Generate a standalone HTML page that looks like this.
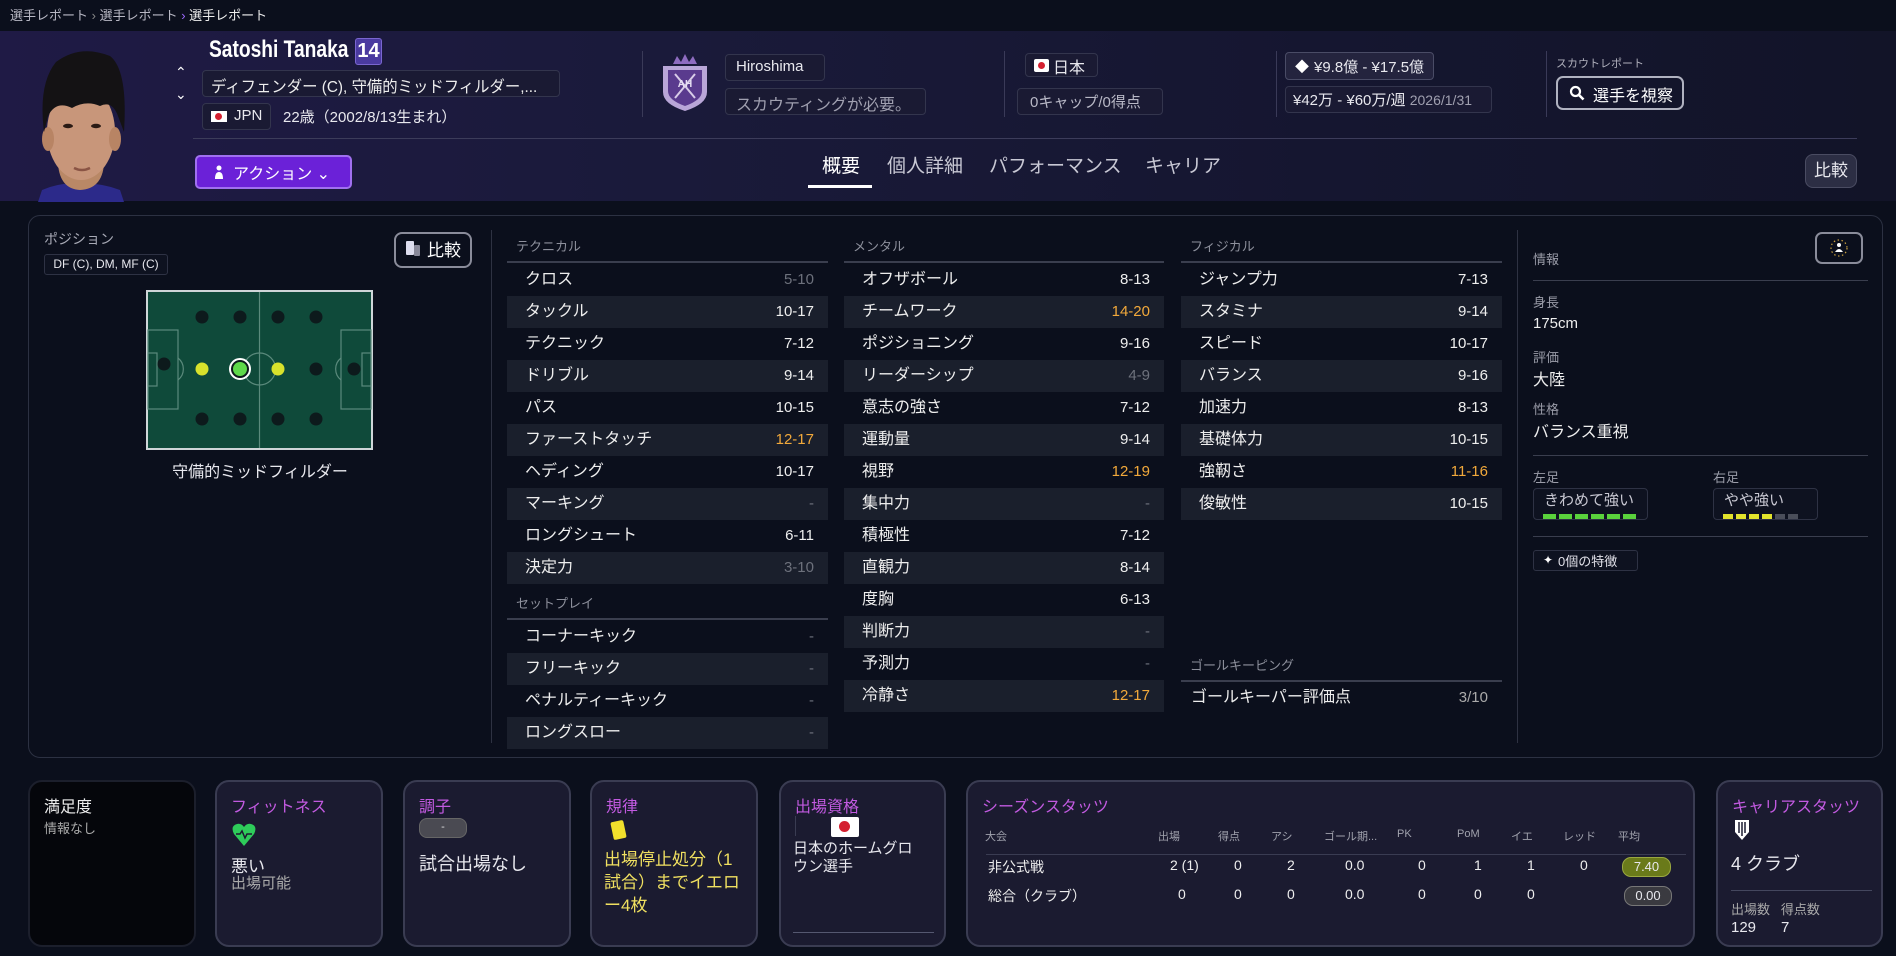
<!DOCTYPE html>
<html><head><meta charset="utf-8"><style>
*{margin:0;padding:0;box-sizing:border-box}
body{width:1896px;height:956px;background:#0b0f1c;font-family:"Liberation Sans","Noto Sans CJK JP",sans-serif;color:#e8e8ee;position:relative;overflow:hidden}
.a{position:absolute;white-space:nowrap}
.box{position:absolute;border:1px solid #33354d;border-radius:4px;background:#1a1a33}
.hdr{position:absolute;left:0;top:31px;width:1896px;height:170px;background:linear-gradient(90deg,#1f1a45 0%,#1a1a3a 35%,#151630 70%,#121428 100%)}
.vd{position:absolute;width:1px;background:#3a3a58}
.tab{position:absolute;top:151px;font-size:19px;color:#c8c8d4}
.col{position:absolute}
.sh{position:absolute;font-size:13px;color:#8d909c}
.ln{position:absolute;height:2px;background:#3a3e4e}
.row{position:absolute;height:32px;font-size:16px;color:#eee}
.row.s{background:#1a1f2c}
.row .l{position:absolute;left:18px;top:0;line-height:32px}
.row .v{position:absolute;right:14px;top:0;line-height:32px;font-size:15px}
.o{color:#f2a93b}.g{color:#6d717c}
.card{position:absolute;top:780px;height:167px;border:2px solid #3a3c52;border-radius:14px;background:#1b1b30}
.ct{position:absolute;left:14px;top:11px;font-size:16px;color:#c25ae0}
.il{position:absolute;font-size:13px;color:#9a9ca8}
.iv{position:absolute;font-size:16px;color:#eee}
.th{position:absolute;top:828px;font-size:11px;color:#a0a2ad}
.td{position:absolute;font-size:14px;color:#eee}
</style></head><body>
<div class="a" style="left:10px;top:5px;font-size:13px;color:#b8b8c4">選手レポート <span style="color:#888">›</span> 選手レポート <span style="color:#9d6bff">›</span> <span style="color:#eee">選手レポート</span></div>

<div class="hdr"></div>
<svg class="a" style="left:20px;top:44px" width="120" height="158" viewBox="0 0 120 158">
<path d="M18 158 L22 146 Q40 138 58 140 Q80 138 100 146 L104 158Z" fill="#2c2a8a"/>
<path d="M38 120 Q40 145 60 146 Q82 145 84 120 L84 100 L38 100Z" fill="#b98866"/>
<ellipse cx="61" cy="88" rx="34" ry="48" fill="#c8967a"/>
<ellipse cx="28" cy="95" rx="6" ry="12" fill="#b88464"/>
<ellipse cx="95" cy="95" rx="6" ry="12" fill="#b88464"/>
<path d="M24 88 Q18 40 36 18 Q60 0 90 12 Q108 26 104 88 L98 72 Q92 56 80 62 Q66 56 52 64 Q36 56 28 72Z" fill="#141214"/>
<ellipse cx="48" cy="82" rx="5" ry="2.2" fill="#2a1a14"/><ellipse cx="76" cy="82" rx="5" ry="2.2" fill="#2a1a14"/>
<path d="M54 124 Q62 128 70 124" stroke="#8a5444" stroke-width="2.5" fill="none"/>
</svg>
<div class="a" style="left:175px;top:64px;color:#fff;font-size:14px">&#x2303;</div>
<div class="a" style="left:175px;top:86px;color:#fff;font-size:14px">&#x2304;</div>
<div class="a" style="left:209px;top:36px;font-weight:bold;font-size:24px;color:#fff;transform:scaleX(0.8);transform-origin:left top">Satoshi Tanaka</div>
<div class="a" style="left:355px;top:38px;width:27px;height:27px;background:#4a3aa0;border:1px solid #7a66d0;border-radius:3px;color:#fff;font-weight:bold;font-size:20px;text-align:center;line-height:25px">14</div>
<div class="box" style="left:202px;top:70px;width:358px;height:27px"></div>
<div class="a" style="left:211px;top:73px;font-size:16px;color:#eee;transform:scaleX(0.96);transform-origin:left">ディフェンダー (C), 守備的ミッドフィルダー,...</div>
<div class="box" style="left:202px;top:103px;width:69px;height:27px"></div>
<div class="a" style="left:211px;top:111px;width:16px;height:11px;background:#fff"><div style="width:7px;height:7px;border-radius:50%;background:#d42030;margin:2px 4px"></div></div>
<div class="a" style="left:234px;top:107px;font-size:15px">JPN</div>
<div class="a" style="left:283px;top:106px;font-size:15px">22歳（2002/8/13生まれ）</div>

<div class="vd" style="left:642px;top:51px;height:66px"></div>
<svg class="a" style="left:659px;top:54px" width="52" height="58" viewBox="0 0 52 58">
<path d="M14 10 L18 2 L22 8 L26 0 L30 8 L34 2 L38 10Z" fill="#8e6cc0"/>
<path d="M4 12 H48 V38 Q48 50 26 57 Q4 50 4 38Z" fill="#b9a6d8"/>
<path d="M9 16 H43 V37 Q43 46 26 52 Q9 46 9 37Z" fill="#5a3b8e"/>
<path d="M16 20 L36 44 M36 20 L16 44" stroke="#d8cce8" stroke-width="2"/>
<text x="26" y="33" font-size="10" fill="#e8e0f4" text-anchor="middle" font-weight="bold" font-family="Liberation Sans">AH</text>
</svg>
<div class="box" style="left:725px;top:54px;width:100px;height:27px"></div>
<div class="a" style="left:736px;top:58px;font-size:15px">Hiroshima</div>
<div class="box" style="left:725px;top:88px;width:201px;height:27px"></div>
<div class="a" style="left:736px;top:91px;font-size:16px;color:#a0a0b0">スカウティングが必要。</div>

<div class="vd" style="left:1004px;top:51px;height:66px"></div>
<div class="box" style="left:1025px;top:53px;width:73px;height:24px"></div>
<div class="a" style="left:1034px;top:59px;width:15px;height:13px;background:#fff;border-radius:2px"><div style="width:7px;height:7px;border-radius:50%;background:#d42030;margin:3px 4px"></div></div>
<div class="a" style="left:1053px;top:54px;font-size:16px">日本</div>
<div class="box" style="left:1017px;top:88px;width:146px;height:27px"></div>
<div class="a" style="left:1030px;top:91px;font-size:15px;color:#b8b8c6">0キャップ/0得点</div>

<div class="vd" style="left:1276px;top:51px;height:66px"></div>
<div class="box" style="left:1285px;top:52px;width:149px;height:28px;background:#24243e;border-color:#4a4c66"></div>
<div class="a" style="left:1295px;top:57px;font-size:14px;color:#fff">&#x25C6;</div>
<div class="a" style="left:1314px;top:56px;font-size:15px">¥9.8億 - ¥17.5億</div>
<div class="box" style="left:1285px;top:86px;width:207px;height:27px"></div>
<div class="a" style="left:1293px;top:89px;font-size:15px">¥42万 - ¥60万/週 <span style="font-size:14px;color:#a0a0b0">2026/1/31</span></div>

<div class="vd" style="left:1546px;top:51px;height:66px"></div>
<div class="a" style="left:1556px;top:55px;font-size:11px;color:#b0b0bc">スカウトレポート</div>
<div class="a" style="left:1556px;top:76px;width:128px;height:34px;border:2px solid #b0b2c0;border-radius:7px"></div>
<svg class="a" style="left:1569px;top:85px" width="16" height="16" viewBox="0 0 16 16"><circle cx="6.5" cy="6.5" r="4.5" fill="none" stroke="#fff" stroke-width="2.2"/><path d="M10 10 L14.5 14.5" stroke="#fff" stroke-width="2.6"/></svg>
<div class="a" style="left:1593px;top:82px;font-size:16px;color:#fff">選手を視察</div>

<div class="a" style="left:193px;top:138px;width:1664px;height:1px;background:#3c3c5a"></div>
<div class="a" style="left:195px;top:155px;width:157px;height:34px;background:#6b21d8;border:2px solid #a070f0;border-radius:5px"></div>
<svg class="a" style="left:214px;top:164px" width="10" height="16" viewBox="0 0 10 16"><circle cx="5" cy="4" r="2.5" fill="#fff"/><path d="M1 15 Q1 8 5 8 Q9 8 9 15Z" fill="#fff"/></svg>
<div class="a" style="left:233px;top:160px;font-size:16px;color:#fff">アクション &#x2304;</div>
<div class="tab" style="left:822px;color:#fff">概要</div>
<div class="a" style="left:808px;top:185px;width:64px;height:3px;background:#fff"></div>
<div class="tab" style="left:887px">個人詳細</div>
<div class="tab" style="left:989px">パフォーマンス</div>
<div class="tab" style="left:1145px">キャリア</div>
<div class="a" style="left:1805px;top:154px;width:52px;height:34px;background:#2c2e44;border:1px solid #4a4c62;border-radius:8px;font-size:17px;text-align:center;line-height:32px">比較</div>

<div class="a" style="left:28px;top:215px;width:1855px;height:543px;border:1px solid #2c3142;border-radius:12px"></div>
<div class="a" style="left:44px;top:229px;font-size:14px;color:#a8aab6">ポジション</div>
<div class="a" style="left:44px;top:254px;width:124px;height:21px;border:1px solid #2e3244;border-radius:3px;background:#0e1220;font-size:12px;text-align:center;line-height:19px">DF (C), DM, MF (C)</div>
<div class="a" style="left:394px;top:232px;width:78px;height:36px;border:2px solid #8a8c9a;border-radius:8px"></div>
<div class="a" style="left:406px;top:241px;width:8px;height:14px;background:#dde;border-radius:1px"></div>
<div class="a" style="left:414px;top:245px;width:6px;height:11px;background:#889;border-radius:1px"></div>
<div class="a" style="left:427px;top:236px;font-size:17px;color:#fff">比較</div>
<svg class="a" style="left:146px;top:290px" width="227" height="160" viewBox="0 0 227 160">
<rect x="1" y="1" width="225" height="158" fill="#0f4a3a" stroke="#cfd6d8" stroke-width="2"/>
<g stroke="#5b8a7c" stroke-width="1.2" fill="none">
<line x1="113.5" y1="2" x2="113.5" y2="158"/><circle cx="113.5" cy="79" r="16"/>
<rect x="2" y="40" width="30" height="79"/><rect x="2" y="63" width="9" height="33"/><path d="M32 68 A14 14 0 0 1 32 90"/>
<rect x="195" y="40" width="30" height="79"/><rect x="216" y="63" width="9" height="33"/><path d="M195 68 A14 14 0 0 0 195 90"/></g>
<g fill="#0d1a1c"><circle cx="56" cy="27" r="6.5"/><circle cx="94" cy="27" r="6.5"/><circle cx="132" cy="27" r="6.5"/><circle cx="170" cy="27" r="6.5"/>
<circle cx="56" cy="129" r="6.5"/><circle cx="94" cy="129" r="6.5"/><circle cx="132" cy="129" r="6.5"/><circle cx="170" cy="129" r="6.5"/>
<circle cx="18" cy="74" r="6.5"/><circle cx="170" cy="79" r="6.5"/><circle cx="208" cy="79" r="6.5"/></g>
<circle cx="56" cy="79" r="6.5" fill="#d8e22c"/><circle cx="132" cy="79" r="6.5" fill="#d8e22c"/>
<circle cx="94" cy="79" r="10" fill="#0d1a1c" stroke="#fff" stroke-width="2"/><circle cx="94" cy="79" r="7" fill="#5ed84a"/>
</svg>
<div class="a" style="left:260px;top:458px;transform:translateX(-50%);font-size:16px">守備的ミッドフィルダー</div>
<div class="vd" style="left:491px;top:230px;height:513px;background:#2e3242"></div>

<div class="sh" style="left:516px;top:236px">テクニカル</div>
<div class="ln" style="left:507px;top:261px;width:321px"></div>
<div class="col" style="left:507px;top:264px;width:321px">
<div class="row" style="top:0;width:321px"><span class="l">クロス</span><span class="v g">5-10</span></div>
<div class="row s" style="top:32px;width:321px"><span class="l">タックル</span><span class="v">10-17</span></div>
<div class="row" style="top:64px;width:321px"><span class="l">テクニック</span><span class="v">7-12</span></div>
<div class="row s" style="top:96px;width:321px"><span class="l">ドリブル</span><span class="v">9-14</span></div>
<div class="row" style="top:128px;width:321px"><span class="l">パス</span><span class="v">10-15</span></div>
<div class="row s" style="top:160px;width:321px"><span class="l">ファーストタッチ</span><span class="v o">12-17</span></div>
<div class="row" style="top:192px;width:321px"><span class="l">ヘディング</span><span class="v">10-17</span></div>
<div class="row s" style="top:224px;width:321px"><span class="l">マーキング</span><span class="v g">-</span></div>
<div class="row" style="top:256px;width:321px"><span class="l">ロングシュート</span><span class="v">6-11</span></div>
<div class="row s" style="top:288px;width:321px"><span class="l">決定力</span><span class="v g">3-10</span></div>
</div>
<div class="sh" style="left:516px;top:593px">セットプレイ</div>
<div class="ln" style="left:507px;top:618px;width:321px"></div>
<div class="col" style="left:507px;top:621px;width:321px">
<div class="row" style="top:0;width:321px"><span class="l">コーナーキック</span><span class="v g">-</span></div>
<div class="row s" style="top:32px;width:321px"><span class="l">フリーキック</span><span class="v g">-</span></div>
<div class="row" style="top:64px;width:321px"><span class="l">ペナルティーキック</span><span class="v g">-</span></div>
<div class="row s" style="top:96px;width:321px"><span class="l">ロングスロー</span><span class="v g">-</span></div>
</div>

<div class="sh" style="left:853px;top:236px">メンタル</div>
<div class="ln" style="left:844px;top:261px;width:320px"></div>
<div class="col" style="left:844px;top:264px;width:320px">
<div class="row" style="top:0;width:320px"><span class="l">オフザボール</span><span class="v">8-13</span></div>
<div class="row s" style="top:32px;width:320px"><span class="l">チームワーク</span><span class="v o">14-20</span></div>
<div class="row" style="top:64px;width:320px"><span class="l">ポジショニング</span><span class="v">9-16</span></div>
<div class="row s" style="top:96px;width:320px"><span class="l">リーダーシップ</span><span class="v g">4-9</span></div>
<div class="row" style="top:128px;width:320px"><span class="l">意志の強さ</span><span class="v">7-12</span></div>
<div class="row s" style="top:160px;width:320px"><span class="l">運動量</span><span class="v">9-14</span></div>
<div class="row" style="top:192px;width:320px"><span class="l">視野</span><span class="v o">12-19</span></div>
<div class="row s" style="top:224px;width:320px"><span class="l">集中力</span><span class="v g">-</span></div>
<div class="row" style="top:256px;width:320px"><span class="l">積極性</span><span class="v">7-12</span></div>
<div class="row s" style="top:288px;width:320px"><span class="l">直観力</span><span class="v">8-14</span></div>
<div class="row" style="top:320px;width:320px"><span class="l">度胸</span><span class="v">6-13</span></div>
<div class="row s" style="top:352px;width:320px"><span class="l">判断力</span><span class="v g">-</span></div>
<div class="row" style="top:384px;width:320px"><span class="l">予測力</span><span class="v g">-</span></div>
<div class="row s" style="top:416px;width:320px"><span class="l">冷静さ</span><span class="v o">12-17</span></div>
</div>

<div class="sh" style="left:1190px;top:236px">フィジカル</div>
<div class="ln" style="left:1181px;top:261px;width:321px"></div>
<div class="col" style="left:1181px;top:264px;width:321px">
<div class="row" style="top:0;width:321px"><span class="l">ジャンプ力</span><span class="v">7-13</span></div>
<div class="row s" style="top:32px;width:321px"><span class="l">スタミナ</span><span class="v">9-14</span></div>
<div class="row" style="top:64px;width:321px"><span class="l">スピード</span><span class="v">10-17</span></div>
<div class="row s" style="top:96px;width:321px"><span class="l">バランス</span><span class="v">9-16</span></div>
<div class="row" style="top:128px;width:321px"><span class="l">加速力</span><span class="v">8-13</span></div>
<div class="row s" style="top:160px;width:321px"><span class="l">基礎体力</span><span class="v">10-15</span></div>
<div class="row" style="top:192px;width:321px"><span class="l">強靭さ</span><span class="v o">11-16</span></div>
<div class="row s" style="top:224px;width:321px"><span class="l">俊敏性</span><span class="v">10-15</span></div>
</div>
<div class="sh" style="left:1190px;top:655px">ゴールキーピング</div>
<div class="ln" style="left:1181px;top:680px;width:321px"></div>
<div class="row" style="left:1181px;top:682px;width:321px"><span class="l" style="left:10px">ゴールキーパー評価点</span><span class="v" style="color:#aaa">3/10</span></div>

<div class="vd" style="left:1517px;top:230px;height:513px;background:#2e3242"></div>
<div class="il" style="left:1533px;top:249px">情報</div>
<div class="a" style="left:1815px;top:232px;width:48px;height:32px;border:2px solid #8a8c9a;border-radius:7px"></div>
<svg class="a" style="left:1827px;top:236px" width="24" height="24" viewBox="0 0 24 24"><circle cx="12" cy="12" r="8" fill="none" stroke="#c8a040" stroke-width="1.2" stroke-dasharray="1.5 2.5"/><circle cx="12" cy="9" r="2" fill="#fff"/><path d="M8 16 Q12 10 16 16Z" fill="#fff"/></svg>
<div class="a" style="left:1533px;top:280px;width:335px;height:1px;background:#3a3e4e"></div>
<div class="il" style="left:1533px;top:292px">身長</div>
<div class="iv" style="left:1533px;top:315px;font-size:15px">175cm</div>
<div class="il" style="left:1533px;top:347px">評価</div>
<div class="iv" style="left:1533px;top:366px">大陸</div>
<div class="il" style="left:1533px;top:399px">性格</div>
<div class="iv" style="left:1533px;top:418px">バランス重視</div>
<div class="a" style="left:1533px;top:455px;width:335px;height:1px;background:#3a3e4e"></div>
<div class="il" style="left:1533px;top:467px">左足</div>
<div class="il" style="left:1713px;top:467px">右足</div>
<div class="a" style="left:1533px;top:488px;width:115px;height:32px;border:1px solid #2e3244;border-radius:4px;background:#0e1220"></div>
<div class="a" style="left:1544px;top:489px;font-size:15px;color:#c8c8d2">きわめて強い</div>
<div class="a" style="left:1543px;top:514px;display:flex;gap:3px"><i style="width:13px;height:5px;background:#5ad23c"></i><i style="width:13px;height:5px;background:#5ad23c"></i><i style="width:13px;height:5px;background:#5ad23c"></i><i style="width:13px;height:5px;background:#5ad23c"></i><i style="width:13px;height:5px;background:#5ad23c"></i><i style="width:13px;height:5px;background:#5ad23c"></i></div>
<div class="a" style="left:1713px;top:488px;width:105px;height:32px;border:1px solid #2e3244;border-radius:4px;background:#0e1220"></div>
<div class="a" style="left:1724px;top:489px;font-size:15px;color:#c8c8d2">やや強い</div>
<div class="a" style="left:1723px;top:514px;display:flex;gap:3px"><i style="width:10px;height:5px;background:#e2e42c"></i><i style="width:10px;height:5px;background:#e2e42c"></i><i style="width:10px;height:5px;background:#e2e42c"></i><i style="width:10px;height:5px;background:#e2e42c"></i><i style="width:10px;height:5px;background:#4a4e5a"></i><i style="width:10px;height:5px;background:#4a4e5a"></i></div>
<div class="a" style="left:1533px;top:536px;width:335px;height:1px;background:#3a3e4e"></div>
<div class="a" style="left:1533px;top:550px;width:105px;height:21px;border:1px solid #2e3244;border-radius:3px;background:#0e1220"></div>
<div class="a" style="left:1543px;top:553px;font-size:12px;color:#fff;line-height:14px">&#x2726;</div>
<div class="a" style="left:1558px;top:551px;font-size:13px;color:#e0e0e8">0個の特徴</div>

<div class="card" style="left:28px;width:168px;background:#05060b;border-color:#1c1f2c"><div class="ct" style="color:#eee">満足度</div><div class="a" style="left:14px;top:36px;font-size:13px;color:#aaa">情報なし</div></div>
<div class="card" style="left:215px;width:168px"><div class="ct">フィットネス</div>
<svg class="a" style="left:14px;top:40px" width="26" height="26" viewBox="0 0 26 26"><path d="M13 24 L3 12 Q-1 4 6 2 Q10 1 13 5 Q16 1 20 2 Q27 4 23 12Z" fill="#2ecc5a"/><path d="M5 12 H9 L11 9 L14 16 L16 12 H21" stroke="#1b1b30" stroke-width="1.5" fill="none"/></svg>
<div class="a" style="left:14px;top:70px;font-size:17px">悪い</div><div class="a" style="left:14px;top:90px;font-size:15px;color:#aaa">出場可能</div></div>
<div class="card" style="left:403px;width:168px"><div class="ct">調子</div><div class="a" style="left:14px;top:36px;width:48px;height:20px;border-radius:8px;background:#4a4a52;border:1px solid #666;color:#ddd;font-size:11px;text-align:center;line-height:17px">-</div><div class="a" style="left:14px;top:68px;font-size:18px">試合出場なし</div></div>
<div class="card" style="left:590px;width:168px"><div class="ct">規律</div><div class="a" style="left:20px;top:39px;width:13px;height:18px;background:#f2e02c;transform:rotate(-12deg);border-radius:2px"></div><div class="a" style="left:12px;top:66px;font-size:17px;color:#f0e060;white-space:normal;width:138px;line-height:23px">出場停止処分（1試合）までイエロー4枚</div></div>
<div class="card" style="left:779px;width:167px"><div class="ct">出場資格</div><div class="a" style="left:14px;top:34px;width:1px;height:20px;background:#3a3c52"></div><div class="a" style="left:50px;top:35px;width:28px;height:20px;background:#fff;border-radius:2px"><div style="width:11px;height:11px;border-radius:50%;background:#d42030;margin:4px 8px"></div></div><div class="a" style="left:12px;top:58px;font-size:15px;white-space:normal;width:128px;line-height:18px">日本のホームグロウン選手</div><div class="a" style="left:12px;top:150px;width:141px;height:1px;background:#555870"></div></div>
<div class="card" style="left:966px;width:729px"><div class="ct">シーズンスタッツ</div>
<div class="a" style="left:18px;top:72px;height:1px;background:#3a3c52;width:700px"></div></div>
<div class="th" style="left:985px">大会</div><div class="th" style="left:1158px">出場</div><div class="th" style="left:1218px">得点</div><div class="th" style="left:1271px">アシ</div><div class="th" style="left:1324px">ゴール期...</div><div class="th" style="left:1397px">PK</div><div class="th" style="left:1457px">PoM</div><div class="th" style="left:1511px">イエ</div><div class="th" style="left:1563px">レッド</div><div class="th" style="left:1618px">平均</div>
<div class="td" style="left:988px;top:857px">非公式戦</div><div class="td" style="left:1170px;top:857px">2 (1)</div><div class="td" style="left:1234px;top:857px">0</div><div class="td" style="left:1287px;top:857px">2</div><div class="td" style="left:1345px;top:857px">0.0</div><div class="td" style="left:1418px;top:857px">0</div><div class="td" style="left:1474px;top:857px">1</div><div class="td" style="left:1527px;top:857px">1</div><div class="td" style="left:1580px;top:857px">0</div>
<div class="a" style="left:1622px;top:857px;width:49px;height:20px;border-radius:9px;background:#6a7a1a;border:1px solid #9aa840;font-size:13px;text-align:center;line-height:18px">7.40</div>
<div class="td" style="left:988px;top:886px">総合（クラブ）</div><div class="td" style="left:1178px;top:886px">0</div><div class="td" style="left:1234px;top:886px">0</div><div class="td" style="left:1287px;top:886px">0</div><div class="td" style="left:1345px;top:886px">0.0</div><div class="td" style="left:1418px;top:886px">0</div><div class="td" style="left:1474px;top:886px">0</div><div class="td" style="left:1527px;top:886px">0</div>
<div class="a" style="left:1624px;top:886px;width:48px;height:20px;border-radius:9px;background:#3a3a40;border:1px solid #777;font-size:13px;text-align:center;line-height:18px">0.00</div>
<div class="card" style="left:1716px;width:167px"><div class="ct">キャリアスタッツ</div>
<svg class="a" style="left:16px;top:37px" width="16" height="22" viewBox="0 0 16 22"><path d="M1 1 H15 V13 L8 21 L1 13Z" fill="#fff"/><path d="M5 3 V14 M8 3 V17 M11 3 V14" stroke="#1b1b30" stroke-width="1.5"/></svg>
<div class="a" style="left:13px;top:68px;font-size:18px">4 クラブ</div>
<div class="a" style="left:13px;top:108px;width:141px;height:1px;background:#44475e"></div>
<div class="a" style="left:13px;top:117px;font-size:13px;color:#aaa">出場数&nbsp;&nbsp;&nbsp;得点数</div>
<div class="a" style="left:13px;top:137px;font-size:15px">129&nbsp;&nbsp;&nbsp;&nbsp;&nbsp;&nbsp;7</div></div>
</body></html>
